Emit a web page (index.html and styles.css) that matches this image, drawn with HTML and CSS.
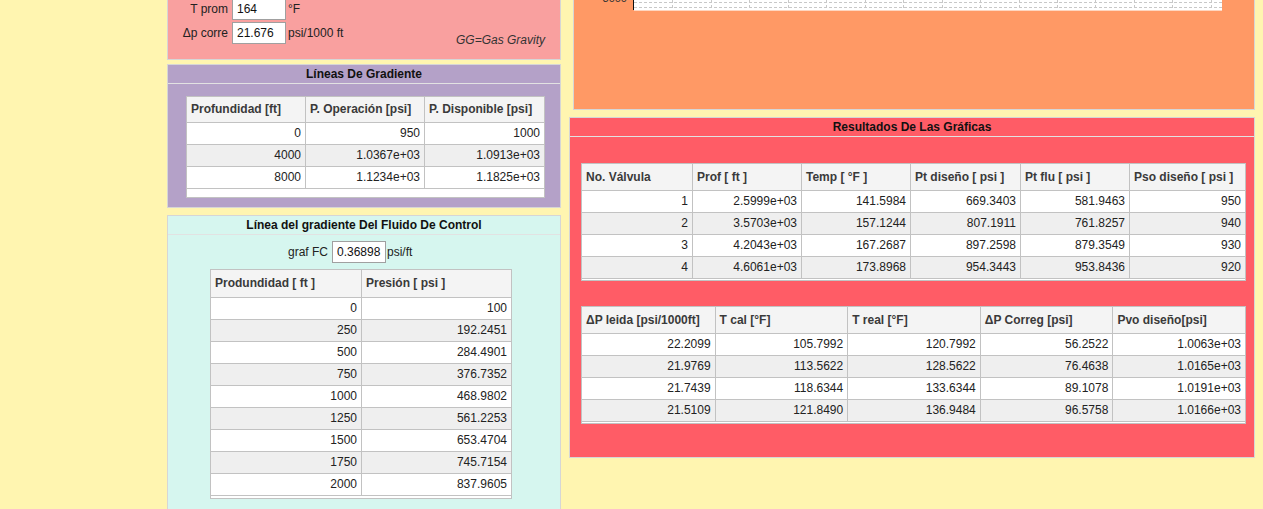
FILE: index.html
```html
<!DOCTYPE html>
<html lang="es">
<head>
<meta charset="utf-8">
<title>Diseño de Gas Lift</title>
<link rel="stylesheet" href="styles.css">
</head>
<body>
<div class="page">
  <div class="col-left">
    <section class="panel panel-pink">
      <div class="form-row">
        <label class="lbl">GG</label><input class="inp" value="0.65"><span class="unit"></span>
      </div>
      <div class="form-row">
        <label class="lbl">T prom</label><input class="inp" value="164"><span class="unit">°F</span>
      </div>
      <div class="form-row">
        <label class="lbl">Δp corre</label><input class="inp" value="21.676"><span class="unit">psi/1000 ft</span>
        <span class="note">GG=Gas Gravity</span>
      </div>
    </section>

    <section class="panel panel-purple">
      <h2 class="panel-title">Líneas De Gradiente</h2>
      <div class="panel-body body-purple">
        <div class="dt dt-purple">
          <table class="t-grad">
            <thead>
              <tr><th>Profundidad [ft]</th><th>P. Operación [psi]</th><th>P. Disponible [psi]</th></tr>
            </thead>
            <tbody>
              <tr><td>0</td><td>950</td><td>1000</td></tr>
              <tr><td>4000</td><td>1.0367e+03</td><td>1.0913e+03</td></tr>
              <tr><td>8000</td><td>1.1234e+03</td><td>1.1825e+03</td></tr>
            </tbody>
          </table>
        </div>
      </div>
    </section>

    <section class="panel panel-cyan">
      <h2 class="panel-title">Línea del gradiente Del Fluido De Control</h2>
      <div class="panel-body body-cyan">
        <div class="graf-row">
          <label class="graf-lbl">graf FC</label><input class="inp" value="0.36898"><span class="unit-tight">psi/ft</span>
        </div>
        <div class="dt dt-cyan">
          <table>
            <thead>
              <tr><th>Produndidad [ ft ]</th><th>Presión [ psi ]</th></tr>
            </thead>
            <tbody>
              <tr><td>0</td><td>100</td></tr>
              <tr><td>250</td><td>192.2451</td></tr>
              <tr><td>500</td><td>284.4901</td></tr>
              <tr><td>750</td><td>376.7352</td></tr>
              <tr><td>1000</td><td>468.9802</td></tr>
              <tr><td>1250</td><td>561.2253</td></tr>
              <tr><td>1500</td><td>653.4704</td></tr>
              <tr><td>1750</td><td>745.7154</td></tr>
              <tr><td>2000</td><td>837.9605</td></tr>
            </tbody>
          </table>
        </div>
      </div>
    </section>
  </div>

  <div class="col-right">
    <section class="panel panel-orange">
      <svg class="chart" width="640" height="60" viewBox="0 0 640 60">
        <text x="37" y="42" text-anchor="end" class="axis-label">3000</text>
        <rect x="44" y="0" width="588" height="50" fill="#ffffff"/>
        <g class="grid">
          <line x1="44" y1="2.5" x2="632" y2="2.5"/>
          <line x1="44" y1="42.5" x2="632" y2="42.5"/>
          <line x1="44" y1="47.5" x2="632" y2="47.5"/>
          <line x1="82.5" y1="0" x2="82.5" y2="50"/>
          <line x1="121.5" y1="0" x2="121.5" y2="50"/>
          <line x1="159.5" y1="0" x2="159.5" y2="50"/>
          <line x1="198.5" y1="0" x2="198.5" y2="50"/>
          <line x1="236.5" y1="0" x2="236.5" y2="50"/>
          <line x1="275.5" y1="0" x2="275.5" y2="50"/>
          <line x1="313.5" y1="0" x2="313.5" y2="50"/>
          <line x1="352.5" y1="0" x2="352.5" y2="50"/>
          <line x1="390.5" y1="0" x2="390.5" y2="50"/>
          <line x1="429.5" y1="0" x2="429.5" y2="50"/>
          <line x1="467.5" y1="0" x2="467.5" y2="50"/>
          <line x1="505.5" y1="0" x2="505.5" y2="50"/>
          <line x1="544.5" y1="0" x2="544.5" y2="50"/>
          <line x1="582.5" y1="0" x2="582.5" y2="50"/>
          <line x1="621.5" y1="0" x2="621.5" y2="50"/>
        </g>
        <line x1="44" y1="50.5" x2="632" y2="50.5" stroke="#ffd6c0" stroke-width="1"/>
        <line x1="43.5" y1="0" x2="43.5" y2="50" stroke="#111" stroke-width="1"/>
      </svg>
    </section>

    <section class="panel panel-red">
      <h2 class="panel-title">Resultados De Las Gráficas</h2>
      <div class="panel-body body-red">
        <div class="dt dt-red">
          <table class="t-valv">
            <thead>
              <tr><th>No. Válvula</th><th>Prof [ ft ]</th><th>Temp [ °F ]</th><th>Pt diseño [ psi ]</th><th>Pt flu [ psi ]</th><th>Pso diseño [ psi ]</th></tr>
            </thead>
            <tbody>
              <tr><td>1</td><td>2.5999e+03</td><td>141.5984</td><td>669.3403</td><td>581.9463</td><td>950</td></tr>
              <tr><td>2</td><td>3.5703e+03</td><td>157.1244</td><td>807.1911</td><td>761.8257</td><td>940</td></tr>
              <tr><td>3</td><td>4.2043e+03</td><td>167.2687</td><td>897.2598</td><td>879.3549</td><td>930</td></tr>
              <tr><td>4</td><td>4.6061e+03</td><td>173.8968</td><td>954.3443</td><td>953.8436</td><td>920</td></tr>
            </tbody>
          </table>
        </div>
        <div class="dt dt-red dt-second">
          <table>
            <thead>
              <tr><th>ΔP leida [psi/1000ft]</th><th>T cal [°F]</th><th>T real [°F]</th><th>ΔP Correg [psi]</th><th>Pvo diseño[psi]</th></tr>
            </thead>
            <tbody>
              <tr><td>22.2099</td><td>105.7992</td><td>120.7992</td><td>56.2522</td><td>1.0063e+03</td></tr>
              <tr><td>21.9769</td><td>113.5622</td><td>128.5622</td><td>76.4638</td><td>1.0165e+03</td></tr>
              <tr><td>21.7439</td><td>118.6344</td><td>133.6344</td><td>89.1078</td><td>1.0191e+03</td></tr>
              <tr><td>21.5109</td><td>121.8490</td><td>136.9484</td><td>96.5758</td><td>1.0166e+03</td></tr>
            </tbody>
          </table>
        </div>
      </div>
    </section>
  </div>
</div>
</body>
</html>
```

FILE: styles.css
```css
* { box-sizing: border-box; }

html, body { overflow: hidden; }

body {
  margin: 0;
  background: #fff5b0;
  font-family: "Liberation Sans", Arial, sans-serif;
  font-size: 12px;
  color: #222;
}

.page {
  display: flex;
  align-items: flex-start;
  gap: 8px;
  padding-left: 167px;
}

.col-left {
  width: 394px;
  margin-top: -33px;
  display: flex;
  flex-direction: column;
}

.col-right {
  width: 686px;
  margin-top: -50px;
  display: flex;
  flex-direction: column;
}

.panel {
  border: 1px solid #d6d6d6;
}

.panel-title {
  margin: 0;
  font-size: 12px;
  font-weight: bold;
  line-height: 18px;
  text-align: center;
  color: #111;
  border-bottom: 1px solid #e2e2e2;
}

/* ---------- pink form panel ---------- */
.panel-pink {
  background: #f9a09f;
  padding: 6px 15px 15px 0;
}

.form-row {
  display: flex;
  align-items: center;
  height: 22px;
  margin-bottom: 2px;
}
.form-row:last-child { margin-bottom: 0; }

.lbl {
  width: 64px;
  padding-right: 4px;
  text-align: right;
  color: #222;
}

.inp {
  width: 54px;
  height: 22px;
  border: 1px solid #a0a0a0;
  background: #fff;
  padding: 0 4px;
  font-family: "Liberation Sans", Arial, sans-serif;
  font-size: 12px;
  color: #111;
  outline: none;
}

.unit { padding-left: 2px; color: #222; }

.note {
  margin-left: auto;
  align-self: flex-end;
  margin-bottom: -3px;
  line-height: 14px;
  font-style: italic;
  color: #333;
}

/* ---------- purple panel ---------- */
.panel-purple {
  background: #b4a1c8;
  margin-top: 4px;
}
.body-purple { padding: 12px 15px 9px 18px; }

/* ---------- cyan panel ---------- */
.panel-cyan {
  background: #d6f6ef;
  margin-top: 7px;
}
.body-cyan { padding: 6px 0 12px 0; }

.graf-row {
  display: flex;
  align-items: center;
  height: 22px;
  padding-left: 120px;
  margin-bottom: 6px;
}
.graf-lbl { margin-right: 4px; color: #222; }
.unit-tight { padding-left: 1px; color: #222; }

/* ---------- orange chart panel ---------- */
.panel-orange {
  background: #ff9965;
  height: 160px;
  margin-left: 4px;
  padding: 9px 0 0 16px;
}
.chart { display: block; }
.axis-label {
  font-family: "Liberation Sans", Arial, sans-serif;
  font-size: 11px;
  fill: #333;
}
.grid line {
  stroke: #c8c8c8;
  stroke-width: 1;
  stroke-dasharray: 3 2;
}

/* ---------- red results panel ---------- */
.panel-red {
  background: #ff5c66;
  margin-top: 7px;
}
.body-red { padding: 26px 8px 33px 11px; }
.dt-second { margin-top: 25px; }

/* ---------- data tables ---------- */
.dt {
  background: #fff;
  border: 1px solid #c2c2c2;
}
.dt-purple { padding-bottom: 8px; }
.dt-cyan { width: 302px; margin-left: 42px; padding-bottom: 2px; }
.dt-red { padding-bottom: 1px; }

.dt table {
  width: 100%;
  border-collapse: separate;
  border-spacing: 0;
  table-layout: fixed;
}

.t-grad th:nth-child(1) { width: 118px; }
.t-grad th:nth-child(2) { width: 119px; }

.t-valv th:nth-child(1),
.t-valv th:nth-child(4) { width: 110px; }
.t-valv th:nth-child(2),
.t-valv th:nth-child(3),
.t-valv th:nth-child(5) { width: 109px; }

.dt th {
  background: #f4f4f4;
  color: #3a3a3a;
  font-weight: bold;
  text-align: left;
  padding: 0 4px;
  line-height: 25px;
  border-bottom: 1px solid #c2c2c2;
  white-space: nowrap;
  overflow: hidden;
}
.dt-cyan th { line-height: 27px; }
.dt-red th { line-height: 26px; }

.dt td {
  text-align: right;
  padding: 0 4px;
  line-height: 21px;
  border-bottom: 1px solid #c2c2c2;
  color: #222;
  background: #fff;
  white-space: nowrap;
}

.dt th + th,
.dt td + td { border-left: 1px solid #c2c2c2; }

.dt tbody tr:nth-child(even) td { background: #efefef; }
```
